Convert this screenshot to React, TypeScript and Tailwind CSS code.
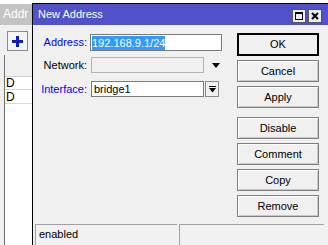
import React from "react";

const font = { fontFamily: '"Liberation Sans", Arial, sans-serif' };

function DlgButton({ label, isDefault }: { label: string; isDefault?: boolean }) {
  return (
    <div
      className={
        isDefault
          ? "h-[23px] flex items-center justify-center border-2 border-black bg-[#f0f0f0] text-[11px] text-black"
          : "h-[22px] flex items-center justify-center border border-[#7f7f7f] bg-[#f0f0f0] shadow-[inset_1px_1px_0_#ffffff,inset_-1px_-1px_0_#c8c8c8] text-[11px] text-black"
      }
    >
      {label}
    </div>
  );
}

function LeftWindow() {
  return (
    <div className="w-[32px] shrink-0 mt-[4px] flex flex-col bg-[#f0f0f0]">
      {/* title */}
      <div className="h-[21px] bg-[#c3c3c3] text-white text-[12px] leading-[21px] pl-[3px] whitespace-nowrap overflow-hidden">
        Addr
      </div>
      {/* toolbar */}
      <div className="h-[30px] pt-[6px] pl-[7px]">
        <div className="w-[21px] h-[20px] border border-[#8a8a8a] bg-[#f4f4f4] flex items-center justify-center">
          <svg width="11" height="11" viewBox="0 0 11 11">
            <rect x="4" y="0" width="3" height="11" fill="#0a1fb8" />
            <rect x="0" y="4" width="11" height="3" fill="#0a1fb8" />
          </svg>
        </div>
      </div>
      {/* list */}
      <div className="flex-1 ml-[4px] border-l border-[#6e6e6e] bg-white flex flex-col">
        <div className="h-[22px] bg-[#f0f0f0] border-b border-[#d0d0d0]" />
        <div className="h-[13px] border-b border-[#d8d8d8] text-[12px] leading-[13px] pl-[1px] text-black">D</div>
        <div className="h-[14px] border-b border-[#d8d8d8] text-[12px] leading-[14px] pl-[1px] text-black">D</div>
        <div className="flex-1" />
      </div>
    </div>
  );
}

export default function App() {
  return (
    <div className="w-[328px] h-[245px] overflow-hidden bg-white flex" style={font}>
      <LeftWindow />

      {/* dialog */}
      <div className="flex-1 mt-[3px] border-l border-t border-black flex flex-col bg-[#f0f0f0]">
        {/* title bar */}
        <div className="h-[21px] bg-[#5151c9] flex items-center pl-[5px] pr-[6px]">
          <span className="text-white text-[11px] flex-1">New Address</span>
          <div className="flex gap-[2px] mt-[2px]">
            <div className="w-[14px] h-[14px] bg-[#ececec] border border-[#555] flex items-center justify-center">
              <div className="w-[8px] h-[8px] border border-black border-t-2" />
            </div>
            <div className="w-[14px] h-[14px] bg-[#ececec] border border-[#555] flex items-center justify-center">
              <svg width="8" height="8" viewBox="0 0 8 8">
                <path d="M1 1 L7 7 M7 1 L1 7" stroke="#000" strokeWidth="2" />
              </svg>
            </div>
          </div>
        </div>

        {/* body */}
        <div className="flex-1 flex">
          {/* form */}
          <div className="flex-1 pt-[9px] text-[11px]">
            <div className="flex items-center h-[17px]">
              <div className="w-[54px] text-right text-[#0000ff]">Address:</div>
              <div className="ml-[3px] w-[132px] h-[17px] bg-white border border-[#7a7a7a] flex items-center pl-[1px]">
                <span className="bg-[#3399ff] text-white leading-[14px]">192.168.9.1/24</span>
              </div>
            </div>
            <div className="flex items-center h-[16px] mt-[6px]">
              <div className="w-[54px] text-right text-black">Network:</div>
              <div className="ml-[4px] w-[113px] h-[16px] bg-[#f0f0f0] border border-[#b4b4b4]" />
              <svg className="ml-[8px]" width="8" height="5" viewBox="0 0 8 5">
                <path d="M0 0 L8 0 L4 5 Z" fill="#000" />
              </svg>
            </div>
            <div className="flex items-center h-[16px] mt-[8px]">
              <div className="w-[54px] text-right text-[#0000ff]">Interface:</div>
              <div className="ml-[4px] w-[113px] h-[16px] bg-white border border-[#7a7a7a] flex items-center pl-[2px] text-black">
                bridge1
              </div>
              <div className="ml-[1px] w-[14px] h-[16px] bg-[#f0f0f0] border border-[#8a8a8a] flex items-center justify-center">
                <svg width="7" height="7" viewBox="0 0 7 7">
                  <rect x="0" y="0" width="7" height="1" fill="#000" />
                  <path d="M0 2 L7 2 L3.5 6.5 Z" fill="#000" />
                </svg>
              </div>
            </div>
          </div>

          {/* buttons */}
          <div className="w-[82px] mr-[9px] pt-[8px] flex flex-col">
            <DlgButton label="OK" isDefault />
            <div className="mt-[4px] flex flex-col gap-[4px]">
              <DlgButton label="Cancel" />
              <DlgButton label="Apply" />
            </div>
            <div className="mt-[9px] flex flex-col gap-[4px]">
              <DlgButton label="Disable" />
              <DlgButton label="Comment" />
              <DlgButton label="Copy" />
              <DlgButton label="Remove" />
            </div>
          </div>
        </div>

        {/* status bar */}
        <div className="h-[21px] flex gap-[2px] pl-[2px] pr-[4px] shrink-0">
          <div className="w-[142px] border-t border-l border-[#a0a0a0] text-[11px] leading-[18px] pl-[3px] text-black">
            enabled
          </div>
          <div className="flex-1 border-t border-l border-[#a0a0a0]" />
        </div>
      </div>
    </div>
  );
}
